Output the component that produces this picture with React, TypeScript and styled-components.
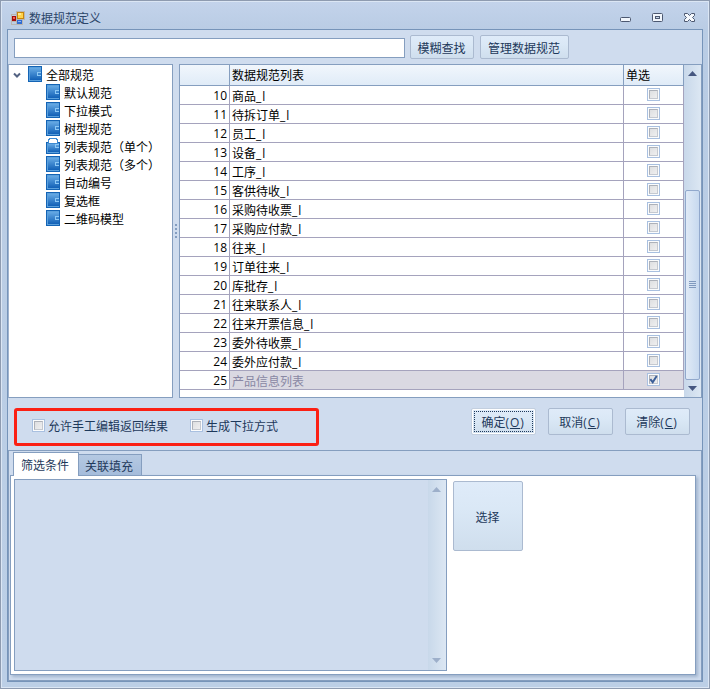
import React from "react";
import styled, { createGlobalStyle, css } from "styled-components";

const GlobalStyle = createGlobalStyle`
  * { box-sizing: border-box; }
  body { margin: 0; }
  body, button, input {
    font-family: "Open Sans", "Noto Sans CJK SC", sans-serif;
    font-size: 12px;
    line-height: 16px;
  }
`;

const Window = styled.div`
  width: 710px;
  height: 689px;
  border: 1px solid #8e9bb0;
  background: #8e9bb0;
  color: #1e395b;
`;

const WindowSurface = styled.div`
  height: 687px;
  border: 1px solid #dbe6f4;
  padding: 0 5px 5px;
  display: flex;
  flex-direction: column;
  background: linear-gradient(#c3d3eb 0, #b9cce4 28px, #bccfe6 100%);
`;

const TitleBar = styled.header`
  height: 27px;
  display: flex;
  align-items: center;
  padding: 5px 8px 0 4px;
`;

const Title = styled.span`
  flex: 1;
  padding: 1px 0 0 4px;
  color: #2b4569;
`;

const Controls = styled.div`
  display: flex;
  gap: 21px;
`;

const Client = styled.main`
  flex: 1;
  border: 1px solid #7694b9;
  background: #cfdcee;
  display: flex;
  flex-direction: column;
`;

const Toolbar = styled.div`
  height: 34px;
  display: flex;
  align-items: center;
  padding: 0 0 0 6px;
`;

const SearchInput = styled.input`
  width: 391px;
  height: 20px;
  margin: 1px 5px 0 0;
  border: 1px solid #859ebf;
  background: #fff;
  padding: 0 3px;
  outline: none;
`;

const Button = styled.button<{ $w: number; $h: number; $focused?: boolean; $gap?: number }>`
  width: ${(p) => p.$w}px;
  height: ${(p) => p.$h}px;
  margin: 0 ${(p) => p.$gap ?? 0}px 0 0;
  padding: 3px 1px 0 0;
  flex: none;
  border: 1px solid #abbad0;
  border-radius: 2px;
  background: linear-gradient(#dfebf9, #dae8f6 40%, #cfdeed);
  color: #1e395b;
  white-space: nowrap;
  ${(p) =>
    p.$focused &&
    css`
      box-shadow: inset 0 0 0 1px #fff;
      border-color: #c3cfdf;
      outline: 1px dotted #1e395b;
      outline-offset: -4px;
    `}
`;

const Hotkey = styled.span`
  letter-spacing: 0.9px;
`;

const Browser = styled.section`
  height: 334px;
  display: flex;
`;

const Tree = styled.div`
  width: 165px;
  border: 1px solid #859ebf;
  border-left-color: #9fb3cf;
  background: #fff;
  color: #000;
`;

const TreeRow = styled.div<{ $child?: boolean }>`
  height: 18px;
  display: flex;
  align-items: center;
  padding-left: ${(p) => (p.$child ? 37 : 4)}px;
  white-space: nowrap;
`;

const TreeLabel = styled.span`
  padding: 3px 0 0 4px;
`;

const Chevron = styled.svg`
  margin: 2px 7px 0 0;
`;

const Splitter = styled.div`
  width: 6px;
  display: flex;
  align-items: center;
  justify-content: center;
`;

const ListPanel = styled.div`
  flex: 1;
  display: flex;
  border: 1px solid #859ebf;
  border-right: 0;
  background: #fff;
`;

const Table = styled.div`
  width: 504px;
  color: #000;
`;

const Row = styled.div<{ $header?: boolean; $selected?: boolean }>`
  display: grid;
  grid-template-columns: 50px 394px 60px;
  height: ${(p) => (p.$header ? 21 : 19)}px;
  background: ${(p) => (p.$header ? "linear-gradient(#f1f6fc, #dfebf7)" : p.$selected ? "#dad9e2" : "#fff")};
  color: ${(p) => (p.$selected ? "#8988a4" : "#000")};
  & > * {
    border-right: 1px solid ${(p) => (p.$header ? "#859ebf" : "#a5a3bd")};
    border-bottom: 1px solid ${(p) => (p.$header ? "#859ebf" : "#a5a3bd")};
  }
`;

const Cell = styled.div`
  padding: 3px 0 0 2px;
  overflow: hidden;
  white-space: nowrap;
`;

const NumberCell = styled(Cell)`
  background: #fff;
  color: #000;
  padding: 2px 2px 0 0;
  text-align: right;
`;

const Suffix = styled.span`
  letter-spacing: 1px;
`;

const CheckCell = styled.div`
  display: flex;
  justify-content: center;
  padding-top: 2px;
`;

const CheckFrame = styled.span`
  width: 13px;
  height: 13px;
  flex: none;
  display: block;
  border: 1px solid #a9c0e0;
  background: #fbfcfd;
  padding: 1px;
`;

const CheckInner = styled.span`
  display: block;
  width: 9px;
  height: 9px;
  border: 1px solid #c5c9d0;
  border-top-color: #adb1b9;
  border-left-color: #adb1b9;
  background: linear-gradient(135deg, #dedfe1, #efeff0);
`;

const CheckMark = styled.svg`
  display: block;
  margin: -1px;
  overflow: visible;
`;

const ScrollBar = styled.div<{ $w: number }>`
  width: ${(p) => p.$w}px;
  display: flex;
  flex-direction: column;
  align-items: center;
  justify-content: space-between;
  padding: 7px 1px 7px 0;
  background: linear-gradient(90deg, #c8d8ea, #dce7f3);
`;

const ListScrollBar = styled(ScrollBar)`
  justify-content: flex-start;
  border-right: 1px solid #859ebf;
  padding: 6px 0 5px;
`;

const Thumb = styled.div`
  width: 15px;
  height: 190px;
  margin: 114px 0 6px;
  border: 1px solid #91a8cc;
  border-radius: 2px;
  background: linear-gradient(90deg, #e0eaf6, #c7d9ef);
  display: flex;
  align-items: center;
  justify-content: center;
`;

const Actions = styled.section`
  height: 52px;
  display: flex;
  align-items: flex-start;
  padding: 10px 0 0 6px;
`;

const Options = styled.div`
  width: 305px;
  height: 38px;
  border: 3px solid #fb2014;
  border-radius: 3px;
  display: flex;
  align-items: flex-start;
  padding: 8px 0 0 15px;
  margin-right: 152px;
`;

const Option = styled.label<{ $w: number }>`
  width: ${(p) => p.$w}px;
  display: flex;
  align-items: flex-start;
  gap: 3px;
  white-space: nowrap;
`;

const Details = styled.section`
  flex: 1;
  border: 1px solid #859ebf;
  padding: 1px 5px 5px 1px;
`;

const Tabs = styled.div`
  height: 23px;
  display: flex;
  align-items: flex-end;
  padding-left: 3px;
`;

const Tab = styled.div<{ $active?: boolean }>`
  width: ${(p) => (p.$active ? 66 : 63)}px;
  height: ${(p) => (p.$active ? 24 : 21)}px;
  margin-bottom: ${(p) => (p.$active ? -1 : 0)}px;
  position: relative;
  border: 1px solid #859ebf;
  border-bottom: 0;
  border-left-width: ${(p) => (p.$active ? 1 : 0)}px;
  background: ${(p) => (p.$active ? "#fff" : "linear-gradient(#b5c9e2, #a5bcdb)")};
  padding: ${(p) => (p.$active ? "5px 0 0 7px" : "4px 0 0 6px")};
  white-space: nowrap;
`;

const TabPanel = styled.div`
  height: 200px;
  border: 1px solid #859ebf;
  background: #fff;
  box-shadow: 2px 2px 3px rgba(91, 119, 157, 0.4);
  padding: 3px;
  display: flex;
  gap: 6px;
`;

const ConditionBox = styled.div`
  width: 433px;
  height: 192px;
  border: 1px solid #859ebf;
  background: #cfdcee;
  display: flex;
  justify-content: flex-end;
`;

const SelectSlot = styled.div`
  padding-top: 2px;
`;

type RecordItem = { id: number; name: string; checked?: boolean };

const names = [
  "商品_l", "待拆订单_l", "员工_l", "设备_l", "工序_l", "客供待收_l", "采购待收票_l", "采购应付款_l",
  "往来_l", "订单往来_l", "库批存_l", "往来联系人_l", "往来开票信息_l", "委外待收票_l", "委外应付款_l", "产品信息列表",
];
const records: RecordItem[] = names.map((name, i) => ({ id: i + 10, name, checked: i === 15 }));

const categories = ["默认规范", "下拉模式", "树型规范", "列表规范（单个）", "列表规范（多个）", "自动编号", "复选框", "二维码模型"];

function AppIcon() {
  return (
    <svg width="14" height="14" viewBox="0 0 14 14" shapeRendering="crispEdges">
      <path d="M.5 3.5h5v7h-5zM5.5.5h8v8h-8zM5.5 8.5h6v5h-6zM.5 10.5v3h5" fill="none" stroke="#b9b5b1" />
      <rect x="6" y="1" width="7" height="7" fill="#c8860b" />
      <rect x="7" y="2" width="5" height="5" fill="#ffd34b" />
      <rect x="7" y="2" width="3" height="2" fill="#ffe98f" />
      <rect x="1" y="5" width="4" height="5" fill="#a40c0c" />
      <rect x="2" y="6" width="2" height="2" fill="#f06152" />
      <rect x="6" y="9" width="5" height="4" fill="#316bd0" />
      <rect x="7" y="10" width="3" height="1" fill="#8ab4f7" />
    </svg>
  );
}

function BookIcon({ open }: { open?: boolean }) {
  return (
    <svg width="14" height="16" viewBox="0 0 14 16" shapeRendering="crispEdges">
      <defs>
        <linearGradient id="cover" x1="0" y1="0" x2="0" y2="1">
          <stop offset="0" stopColor="#65a9e4" />
          <stop offset="1" stopColor="#1261b7" />
        </linearGradient>
      </defs>
      <rect x="0" y={open ? 4 : 0} width="14" height={open ? 12 : 16} fill="#1464b5" />
      <rect x="1" y={open ? 5 : 1} width="12" height={open ? 10 : 14} fill="#5ba0dc" />
      <rect x="2" y={open ? 6 : 2} width="11" height={open ? 8 : 12} fill="url(#cover)" />
      <path d="M13 6.5H9.5v3H13" fill="none" stroke="#8cc8f5" />
      {open && <path d="M2.5 5.5v-4h1v-1h7v1h1v4z" fill="#fff" stroke="#3e8bd2" />}
    </svg>
  );
}

function Check({ checked }: { checked?: boolean }) {
  return (
    <CheckFrame>
      <CheckInner>
        {checked && (
          <CheckMark width="9" height="9" viewBox="0 0 9 9">
            <path d="M1.3 4.2 3.7 7.2 7.7 1" fill="none" stroke="#3c5f98" strokeWidth="2" />
          </CheckMark>
        )}
      </CheckInner>
    </CheckFrame>
  );
}

function Arrow({ up, muted }: { up?: boolean; muted?: boolean }) {
  return (
    <svg width="9" height="5" viewBox="0 0 9 5">
      <path d={up ? "M0 5 4.5 0 9 5z" : "M0 0h9L4.5 5z"} fill={muted ? "#9dafca" : "#465780"} />
    </svg>
  );
}

function WindowControls() {
  const stroke = "#4c5870";
  return (
    <Controls>
      <svg width="11" height="10" viewBox="0 0 11 10">
        <rect x=".5" y="4.5" width="10" height="4" rx="1" fill="#f1f6fc" stroke={stroke} />
      </svg>
      <svg width="11" height="10" viewBox="0 0 11 10">
        <rect x=".5" y=".5" width="10" height="8" rx="1" fill="#f1f6fc" stroke={stroke} />
        <rect x="3.5" y="3.5" width="4" height="2" fill="#c6d5e9" stroke={stroke} />
      </svg>
      <svg width="11" height="10" viewBox="0 0 11 10">
        <path d="M.5.5h3l2 2 2-2h3v2l-2 2 2 2v2h-3l-2-2-2 2h-3v-2l2-2-2-2z" fill="#f6f9fd" stroke={stroke} />
      </svg>
    </Controls>
  );
}

function RecordName({ name }: { name: string }) {
  const [base, suffix] = name.split("_");
  return (
    <Cell>
      {base}
      {suffix && <Suffix>_{suffix}</Suffix>}
    </Cell>
  );
}

export default function App() {
  return (
    <>
      <GlobalStyle />
      <Window>
        <WindowSurface>
          <TitleBar>
            <AppIcon />
            <Title>数据规范定义</Title>
            <WindowControls />
          </TitleBar>
          <Client>
            <Toolbar>
              <SearchInput aria-label="查找" />
              <Button $w={64} $h={24} $gap={6}>模糊查找</Button>
              <Button $w={89} $h={24}>管理数据规范</Button>
            </Toolbar>
            <Browser>
              <Tree>
                <TreeRow>
                  <Chevron width="8" height="7" viewBox="0 0 8 7">
                    <path d="m1 1.5 3 3 3-3" fill="none" stroke="#536282" strokeWidth="2" />
                  </Chevron>
                  <BookIcon />
                  <TreeLabel>全部规范</TreeLabel>
                </TreeRow>
                {categories.map((name, i) => (
                  <TreeRow $child key={name}>
                    <BookIcon open={i === 3} />
                    <TreeLabel>{name}</TreeLabel>
                  </TreeRow>
                ))}
              </Tree>
              <Splitter>
                <svg width="2" height="14" viewBox="0 0 2 14" fill="#839dc0">
                  <path d="M0 0h2v2H0zM0 4h2v2H0zM0 8h2v2H0zM0 12h2v2H0z" />
                </svg>
              </Splitter>
              <ListPanel>
                <Table>
                  <Row $header>
                    <Cell />
                    <Cell>数据规范列表</Cell>
                    <Cell>单选</Cell>
                  </Row>
                  {records.map((r) => (
                    <Row key={r.id} $selected={r.checked}>
                      <NumberCell>{r.id}</NumberCell>
                      <RecordName name={r.name} />
                      <CheckCell><Check checked={r.checked} /></CheckCell>
                    </Row>
                  ))}
                </Table>
                <ListScrollBar $w={18}>
                  <Arrow up />
                  <Thumb>
                    <svg width="7" height="8" viewBox="0 0 7 8" shapeRendering="crispEdges">
                      <path d="M0 .5h7M0 2.5h7M0 4.5h7M0 6.5h7" stroke="#8099be" />
                    </svg>
                  </Thumb>
                  <Arrow />
                </ListScrollBar>
              </ListPanel>
            </Browser>
            <Actions>
              <Options>
                <Option $w={158}><Check />允许手工编辑返回结果</Option>
                <Option $w={110}><Check />生成下拉方式</Option>
              </Options>
              <Button $w={65} $h={27} $gap={12} $focused>确定<Hotkey>(<u>O</u>)</Hotkey></Button>
              <Button $w={65} $h={27} $gap={12}>取消<Hotkey>(<u>C</u>)</Hotkey></Button>
              <Button $w={65} $h={27}>清除<Hotkey>(<u>C</u>)</Hotkey></Button>
            </Actions>
            <Details>
              <Tabs>
                <Tab $active>筛选条件</Tab>
                <Tab>关联填充</Tab>
              </Tabs>
              <TabPanel>
                <ConditionBox>
                  <ScrollBar $w={18}>
                    <Arrow up muted />
                    <Arrow muted />
                  </ScrollBar>
                </ConditionBox>
                <SelectSlot>
                  <Button $w={70} $h={70}>选择</Button>
                </SelectSlot>
              </TabPanel>
            </Details>
          </Client>
        </WindowSurface>
      </Window>
    </>
  );
}
